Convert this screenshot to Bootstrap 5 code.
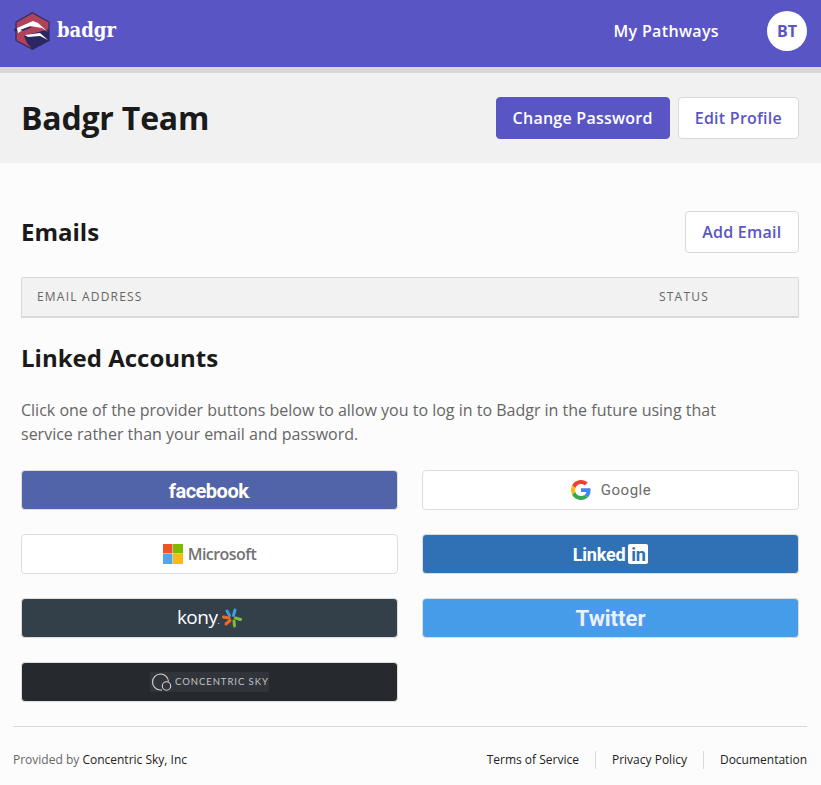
<!DOCTYPE html>
<html lang="en"><head><meta charset="utf-8"><title>Profile</title>
<link href="https://cdn.jsdelivr.net/npm/bootstrap@5.3.0/dist/css/bootstrap.min.css" rel="stylesheet">
<style>
html,body{height:100%}
body{background:#fcfcfc;font-family:"Open Sans",sans-serif;color:#161616;overflow:hidden}
.top-bar{height:73px;background:#5a55c5;border-bottom:6px solid #d8d8d8;padding:0 14px 5px 14px}
.brand-word{font-family:"DejaVu Serif",serif;font-stretch:condensed;font-weight:700;font-size:20px;color:#fff;line-height:1;margin-left:5px;margin-top:-3px}
.top-link{font-weight:600;font-size:16px;color:#fff;text-decoration:none;letter-spacing:.35px;margin-right:48px}
.avatar-disc{width:40px;height:40px;border-radius:50%;background:#fff;color:#5a55c5;font-weight:700;font-size:16px}
.page-head{height:90px;background:#f1f1f1;padding:0 22px 0 21px}
.page-title{font-size:32px;font-weight:700;margin:0;line-height:1.2;letter-spacing:-.2px;color:#1a1a1a}
.act-btn{height:42px;padding:0 16px;font-weight:600;font-size:16px;letter-spacing:.25px;border-radius:4px;line-height:40px}
.act-solid{background:#5a55c5;border:1px solid #5a55c5;color:#fff}
.act-line{background:#fff;border:1px solid #d9d9d9;color:#5a55c5}
.act-wide{padding:0 16.500px}
.main-area{padding:48px 22px 0 21px}
.sect-title{font-size:24px;font-weight:700;margin:0;line-height:1.2;color:#1a1a1a}
.email-head{margin-top:24px;height:41px;background:#f2f2f2;border:1px solid #d9d9d9;border-radius:2px 2px 0 0;border-width:1px 1px 2px 1px;font-size:12px;letter-spacing:1.2px;color:#666;padding:0 15px}
.status-col{width:124px}
.linked-title{margin-top:26px}
.intro-text{margin:25px 0 0;font-size:16px;line-height:24px;color:#666;max-width:720px}
.prov-grid{display:grid;grid-template-columns:377px 377px;column-gap:24px;row-gap:24px;margin-top:24px}
.prov-btn{height:40px;border:1px solid #ddd;border-radius:4px;color:#fff;line-height:1}
.bg-fb{background:#5164a9}
.bg-white-prov{background:#fff;color:#666}
.bg-li{background:#2f71b4}
.bg-kony{background:#333f49}
.bg-tw{background:#459dea}
.bg-cs{background:#26292d}
.fb-word{font-family:Roboto,sans-serif;font-weight:700;font-size:20px;letter-spacing:-.5px;margin-top:2px}
.fb-word i{font-style:normal;font-size:9px;font-weight:400}
.g-word{font-family:Roboto,sans-serif;font-size:15px;font-weight:400;letter-spacing:.55px;color:#6b6b6b;margin-left:10px;margin-top:2px}
.g-mark{margin-left:1px}
.ms-word{font-family:"Open Sans",sans-serif;font-weight:600;font-size:16px;letter-spacing:-.55px;color:#737373;margin-left:5px}
.li-word{font-family:Roboto,sans-serif;font-weight:700;font-size:18px;letter-spacing:-.2px;margin-top:2px}
.li-box{background:#fff;color:#2f71b4;font-family:Roboto,sans-serif;font-weight:700;font-size:18px;width:20px;height:20px;border-radius:2px;margin-left:3px;line-height:22px;text-align:center;letter-spacing:-.3px;display:inline-block}
.kony-word{font-family:"Open Sans",sans-serif;font-weight:400;font-size:19px;letter-spacing:-.5px;margin-right:3px}
.kony-word i{font-style:normal;font-size:8px}
.tw-word{font-family:Roboto,sans-serif;font-weight:700;font-size:22px;background:#4d99ef;color:#eaf3fd;padding:2px 1px 0;line-height:20px}
.cs-panel{background:#31353b;height:20px;width:119px;padding-left:1px}
.cs-panel svg{flex-shrink:0}
.cs-word{font-family:"Lato",sans-serif;font-size:9.500px;letter-spacing:.95px;color:#c4c4c4;margin-left:2px;white-space:nowrap}
.foot-area{margin:24px 14px 0 13px;border-top:1px solid #d9d9d9;padding-top:24px;font-size:12px;line-height:18px}
.foot-muted{color:#666}
.foot-area a{color:#222;text-decoration:none}
.foot-link+.foot-link{border-left:1px solid #d9d9d9;margin-left:16px;padding-left:16px}
</style></head>
<body>
<nav class="top-bar d-flex align-items-center justify-content-between">
  <a class="d-flex align-items-center text-decoration-none" href="#">
    <svg width="38" height="38" viewBox="0 0 38 38">
      <path d="M18.500 .7 L35 10 V28.500 L18.500 37.300 L2 28.500 V10 Z" fill="#b0425a" stroke="#2e2a60" stroke-width="1.200"/>
      <path d="M10 24 L35 17 V28.500 L18.500 37.300 L13 31 Z" fill="#2b2760"/>
      <path d="M3 16 L19 9 L24 11 L34 20 L28 16 L16 14 L4 21 Z" fill="#fff"/>
      <path d="M11 23 L26 21 L34 28 L26 24 L14 25 Z" fill="#fff"/>
      <path d="M6 18 L14 15 L18 15 L9 19 Z" fill="#2b2760"/>
      <circle cx="1.500" cy="18" r="1.500" fill="#2b2760"/>
    </svg>
    <span class="brand-word">badgr</span>
  </a>
  <div class="d-flex align-items-center">
    <a class="top-link" href="#">My Pathways</a>
    <div class="avatar-disc d-flex align-items-center justify-content-center">BT</div>
  </div>
</nav>
<header class="page-head d-flex align-items-center justify-content-between">
  <h1 class="page-title">Badgr Team</h1>
  <div class="d-flex gap-2">
    <button class="btn act-btn act-solid" type="button">Change Password</button>
    <button class="btn act-btn act-line" type="button">Edit Profile</button>
  </div>
</header>
<main class="main-area">
  <div class="d-flex align-items-center justify-content-between">
    <h2 class="sect-title">Emails</h2>
    <button class="btn act-btn act-line act-wide" type="button">Add Email</button>
  </div>
  <div class="email-head d-flex align-items-center justify-content-between">
    <span>EMAIL ADDRESS</span><span class="status-col">STATUS</span>
  </div>
  <h2 class="sect-title linked-title">Linked Accounts</h2>
  <p class="intro-text">Click one of the provider buttons below to allow you to log in to Badgr in the future using that service rather than your email and password.</p>
  <div class="prov-grid">
    <div class="prov-btn bg-fb d-flex align-items-center justify-content-center"><span class="fb-word">facebook<i>.</i></span></div>
    <div class="prov-btn bg-white-prov d-flex align-items-center justify-content-center">
      <svg class="g-mark" width="20" height="20" viewBox="0 0 48 48"><path fill="#ea4335" d="M24 9.500c3.500 0 6.700 1.300 9.200 3.400l6.900-6.900C35.900 2.200 30.300 0 24 0 14.600 0 6.500 5.400 2.600 13.200l8 6.200C12.400 13.700 17.700 9.500 24 9.500z"/><path fill="#4285f4" d="M47 24.500c0-1.600-.1-3.100-.4-4.500H24v9h12.900c-.6 3-2.200 5.500-4.700 7.200l7.700 6C44.400 37.900 47 31.800 47 24.500z"/><path fill="#fbbc05" d="M10.600 28.600c-.5-1.400-.8-3-.8-4.600s.3-3.200.8-4.600l-8-6.200C.9 16.500 0 20.100 0 24s.9 7.500 2.600 10.800l8-6.200z"/><path fill="#34a853" d="M24 48c6.500 0 11.900-2.100 15.900-5.800l-7.700-6c-2.100 1.400-4.900 2.300-8.200 2.300-6.300 0-11.600-4.200-13.400-9.900l-8 6.200C6.500 42.600 14.600 48 24 48z"/></svg>
      <span class="g-word">Google</span>
    </div>
    <div class="prov-btn bg-white-prov d-flex align-items-center justify-content-center">
      <svg width="20" height="20" viewBox="0 0 20 20"><rect width="9.500" height="9.500" fill="#f25325"/><rect x="10" width="10" height="9.500" fill="#80bb03"/><rect y="10" width="9.500" height="10" fill="#4ea6f1"/><rect x="10" y="10" width="10" height="10" fill="#fdbb09"/></svg>
      <span class="ms-word">Microsoft</span>
    </div>
    <div class="prov-btn bg-li d-flex align-items-center justify-content-center"><span class="li-word">Linked</span><span class="li-box">in</span></div>
    <div class="prov-btn bg-kony d-flex align-items-center justify-content-center">
      <span class="kony-word">kony<i>.</i></span>
      <svg width="20" height="20" viewBox="0 0 20 20" fill="none" stroke-width="3" stroke-linecap="round"><path d="M11.500 7.500 L13 2" stroke="#3a9fdc"/><path d="M7.500 7.500 L5 3" stroke="#3a9fdc"/><path d="M7 10 L1.500 9" stroke="#ee6b1f"/><path d="M8 12.500 L4 16" stroke="#ee6b1f"/><path d="M12 13 L12.500 18" stroke="#7fbb35"/><path d="M13.500 10 L18.500 11.500" stroke="#7fbb35"/></svg>
    </div>
    <div class="prov-btn bg-tw d-flex align-items-center justify-content-center"><span class="tw-word">Twitter</span></div>
    <div class="prov-btn bg-cs d-flex align-items-center justify-content-center">
      <div class="cs-panel d-flex align-items-center">
        <svg width="22" height="20" viewBox="0 0 22 20" fill="none" stroke="#d6d6d6" stroke-width="1.100"><path d="M9 18 A8 8 0 1 1 17.500 9.500"/><path d="M9 18 H11"/><circle cx="15.500" cy="14" r="4.200"/></svg>
        <span class="cs-word">CONCENTRIC SKY</span>
      </div>
    </div>
  </div>
</main>
<footer class="foot-area d-flex justify-content-between">
  <div><span class="foot-muted">Provided by</span> <a href="#">Concentric Sky, Inc</a></div>
  <div class="d-flex"><a class="foot-link" href="#">Terms of Service</a><a class="foot-link" href="#">Privacy Policy</a><a class="foot-link" href="#">Documentation</a></div>
</footer>
</body></html>
